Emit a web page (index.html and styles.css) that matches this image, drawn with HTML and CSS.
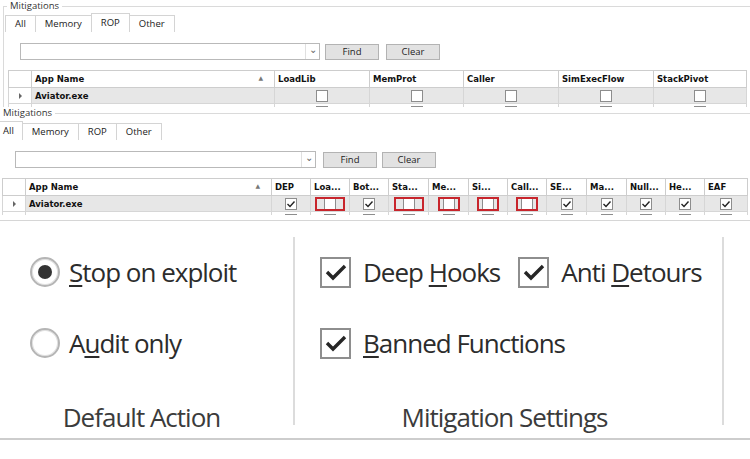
FILE: index.html
```html
<!DOCTYPE html>
<html lang="en">
<head>
  <meta charset="UTF-8" />
  <title>EMET Mitigations</title>
  <link rel="stylesheet" href="styles.css">
</head>
<body>

  <!-- first capture: ROP tab -->
  <div class="win win-top">
    <fieldset class="group">
      <legend>Mitigations</legend>
      <div class="tabs">
        <span class="tab">All</span><span class="tab">Memory</span><span class="tab active">ROP</span><span class="tab">Other</span>
      </div>
      <div class="search">
        <div class="combo"><span class="combo-arrow">&#8964;</span></div>
        <button class="btn btn-find">Find</button>
        <button class="btn btn-clear">Clear</button>
      </div>
      <table class="grid">
        <colgroup>
          <col style="width:23px"><col style="width:243px"><col style="width:95px"><col style="width:94px">
          <col style="width:95px"><col style="width:95px"><col style="width:93px">
        </colgroup>
        <tr>
          <th class="rh"></th>
          <th>App Name <span class="sort">&#9650;</span></th>
          <th>LoadLib</th><th>MemProt</th><th>Caller</th><th>SimExecFlow</th><th>StackPivot</th>
        </tr>
        <tr class="sel">
          <td class="rh"><span class="caret"></span></td>
          <td class="name">Aviator.exe</td>
          <td><span class="chk"></span></td><td><span class="chk"></span></td><td><span class="chk"></span></td>
          <td><span class="chk"></span></td><td><span class="chk"></span></td>
        </tr>
        <tr class="next">
          <td class="rh"></td><td></td>
          <td><span class="chk"></span></td><td><span class="chk"></span></td><td><span class="chk"></span></td>
          <td><span class="chk"></span></td><td><span class="chk"></span></td>
        </tr>
      </table>
    </fieldset>
  </div>

  <!-- second capture: All tab -->
  <div class="win win-mid">
    <fieldset class="group">
      <legend>Mitigations</legend>
      <div class="tabs">
        <span class="tab active">All</span><span class="tab">Memory</span><span class="tab">ROP</span><span class="tab">Other</span>
      </div>
      <div class="search">
        <div class="combo"><span class="combo-arrow">&#8964;</span></div>
        <button class="btn btn-find">Find</button>
        <button class="btn btn-clear">Clear</button>
      </div>
      <table class="grid">
        <colgroup>
          <col style="width:23px"><col style="width:246px">
          <col style="width:39px"><col style="width:39px"><col style="width:39px"><col style="width:40px">
          <col style="width:40px"><col style="width:39px"><col style="width:39px"><col style="width:40px">
          <col style="width:40px"><col style="width:39px"><col style="width:39px"><col style="width:43px">
        </colgroup>
        <tr>
          <th class="rh"></th>
          <th>App Name <span class="sort">&#9650;</span></th>
          <th>DEP</th><th>Loa...</th><th>Bot...</th><th>Sta...</th><th>Me...</th><th>Si...</th>
          <th>Call...</th><th>SE...</th><th>Ma...</th><th>Null...</th><th>He...</th><th>EAF</th>
        </tr>
        <tr class="sel">
          <td class="rh"><span class="caret"></span></td>
          <td class="name">Aviator.exe</td>
          <td><span class="chk on"></span></td>
          <td><span class="hl"><span class="chk"></span></span></td>
          <td><span class="chk on"></span></td>
          <td><span class="hl"><span class="chk"></span></span></td>
          <td><span class="hl hl-sm"><span class="chk"></span></span></td>
          <td><span class="hl hl-sm"><span class="chk"></span></span></td>
          <td><span class="hl hl-sm"><span class="chk"></span></span></td>
          <td><span class="chk on"></span></td>
          <td><span class="chk on"></span></td>
          <td><span class="chk on"></span></td>
          <td><span class="chk on"></span></td>
          <td><span class="chk on"></span></td>
        </tr>
        <tr class="next">
          <td class="rh"></td><td></td>
          <td><span class="chk"></span></td><td><span class="chk"></span></td><td><span class="chk"></span></td>
          <td><span class="chk"></span></td><td><span class="chk"></span></td><td><span class="chk"></span></td>
          <td><span class="chk"></span></td><td><span class="chk"></span></td><td><span class="chk"></span></td>
          <td><span class="chk"></span></td><td><span class="chk"></span></td><td><span class="chk"></span></td>
        </tr>
      </table>
    </fieldset>
  </div>

  <!-- zoomed ribbon -->
  <div class="ribbon">
    <div class="rgroup rgroup-action">
      <div class="opts">
        <div class="opt"><span class="radio on"></span><span><u>S</u>top on exploit</span></div>
        <div class="opt"><span class="radio"></span><span>A<u>u</u>dit only</span></div>
      </div>
      <div class="caption">Default Action</div>
    </div>
    <div class="rsep"></div>
    <div class="rgroup rgroup-settings">
      <div class="opts">
        <div class="opt-row">
          <div class="opt">
            <span class="cbx"><svg width="22" height="18" viewBox="0 0 22 18"><polyline points="2,9 8,15 20,3" fill="none" stroke="#262626" stroke-width="3.4"/></svg></span>
            <span>Deep <u>H</u>ooks</span>
          </div>
          <div class="opt">
            <span class="cbx"><svg width="22" height="18" viewBox="0 0 22 18"><polyline points="2,9 8,15 20,3" fill="none" stroke="#262626" stroke-width="3.4"/></svg></span>
            <span>Anti <u>D</u>etours</span>
          </div>
        </div>
        <div class="opt">
          <span class="cbx"><svg width="22" height="18" viewBox="0 0 22 18"><polyline points="2,9 8,15 20,3" fill="none" stroke="#262626" stroke-width="3.4"/></svg></span>
          <span><u>B</u>anned Functions</span>
        </div>
      </div>
      <div class="caption">Mitigation Settings</div>
    </div>
    <div class="rsep"></div>
  </div>

</body>
</html>
```

FILE: styles.css
```css
* {
  box-sizing: border-box;
}

body {
  margin: 0;
  width: 750px;
  height: 459px;
  overflow: hidden;
  background: #fff;
  font-family: "Open Sans", sans-serif;
  color: #222;
}

/* small windows */
.win {
  overflow: hidden;
}

.win-top {
  height: 107px;
  padding-left: 3px;
}

.win-mid {
  height: 108px;
}

.group {
  margin: 0;
  padding: 0;
  border: 0;
  border-top: 1px solid #dadada;
}

.win-top .group {
  border-left: 1px solid #dadada;
}

.group legend {
  font-size: 9.5px;
  line-height: 12px;
  color: #333;
  padding: 0 3px;
  margin-left: 3px;
}

.win-mid .group legend {
  margin-left: 0;
}

.tabs {
  display: flex;
  align-items: flex-end;
  height: 19px;
  margin-top: 1px;
  padding-left: 1px;
}

.win-mid .tabs {
  margin-top: 2px;
  padding-left: 0;
}

.tab {
  height: 17px;
  padding: 0 9px;
  margin-right: -1px;
  border: 1px solid #d4d4d4;
  border-bottom: 0;
  background: #fff;
  font-size: 9.5px;
  line-height: 15px;
  color: #222;
}

.tab.active {
  height: 19px;
  line-height: 17px;
}

.win-mid .tab:first-child {
  border-left: 0;
  padding: 0 8px 0 3px;
}

.search {
  display: flex;
  align-items: center;
  margin: 11px 0 0 16px;
}

.win-mid .search {
  margin-left: 15px;
}

.combo {
  width: 300px;
  height: 17px;
  border: 1px solid #b9b9b9;
  display: flex;
  justify-content: flex-end;
}

.win-mid .combo {
  width: 301px;
}

.combo-arrow {
  width: 14px;
  border-left: 1px solid #e0e0e0;
  font-size: 10px;
  line-height: 10px;
  text-align: center;
  color: #666;
}

.btn {
  width: 54px;
  height: 16px;
  padding: 0;
  background: #e2e2e2;
  border: 1px solid #b3b3b3;
  font-family: "Open Sans", sans-serif;
  font-size: 9.5px;
  line-height: 13px;
  color: #222;
}

.btn-find {
  margin-left: 5px;
}

.btn-clear {
  margin-left: 7px;
}

.win-mid .btn-find {
  margin-left: 7px;
}

.win-mid .btn-clear {
  margin-left: 5px;
}

/* grid */
.grid {
  margin: 10px 0 0 4px;
  border-collapse: collapse;
  table-layout: fixed;
  font-family: "DejaVu Sans", sans-serif;
  font-size: 8.5px;
  font-weight: bold;
  color: #111;
}

.win-mid .grid {
  margin-left: 2px;
}

.grid th {
  height: 17px;
  padding: 0 0 0 3px;
  text-align: left;
  background: #fff;
  border: 1px solid #cdcdcd;
  white-space: nowrap;
  overflow: hidden;
}

.grid td {
  height: 16px;
  padding: 0;
  text-align: center;
  border: 1px solid #d6d6d6;
  line-height: 0;
}

.grid .sel td {
  background: #e7e7e7;
}

.grid .sel td.rh,
.grid th.rh {
  background: #fff;
}

.grid td.name {
  text-align: left;
  padding-left: 3px;
  line-height: 14px;
}

.sort {
  float: right;
  margin-right: 11px;
  font-size: 6px;
  color: #777;
}

.caret {
  display: inline-block;
  width: 0;
  height: 0;
  border-top: 3px solid transparent;
  border-bottom: 3px solid transparent;
  border-left: 3px solid #666;
}

.chk {
  display: inline-block;
  width: 12px;
  height: 12px;
  border: 1px solid #8d8d8d;
  background: #fff;
  vertical-align: middle;
}

.chk.on {
  background: #fff url("data:image/svg+xml,%3Csvg xmlns='http://www.w3.org/2000/svg' width='10' height='10'%3E%3Cpolyline points='1.5,5 4,7.5 8.5,2.5' fill='none' stroke='%23222' stroke-width='1.4'/%3E%3C/svg%3E") center no-repeat;
}

.hl {
  display: inline-block;
  height: 14px;
  padding: 0 7px;
  border: 2px solid #c8252c;
  overflow: hidden;
  vertical-align: middle;
  line-height: 0;
}

.hl .chk {
  margin-top: -1px;
}

.hl-sm {
  padding: 0 3px;
}

/* ribbon */
.ribbon {
  display: flex;
  height: 220px;
  margin-top: 5px;
  border-top: 1px solid #d6d6d6;
  border-bottom: 2px solid #cdcdcd;
  font-size: 26px;
  letter-spacing: -1px;
  color: #2c2c2c;
}

.rgroup {
  display: flex;
  flex-direction: column;
  padding: 33px 0 6px;
}

.rgroup-action {
  width: 293px;
}

.rgroup-action .opts {
  padding-left: 30px;
}

.rgroup-settings {
  width: 427px;
}

.rgroup-settings .opts {
  padding-left: 25px;
}

.rsep {
  width: 2px;
  margin: 16px 0 13px;
  background: #dcdcdc;
}

.opts {
  display: flex;
  flex-direction: column;
  gap: 35px;
}

.opt-row {
  display: flex;
  gap: 18px;
}

.opt {
  display: flex;
  align-items: center;
  height: 36px;
  gap: 9px;
  white-space: nowrap;
}

.rgroup-settings .opt {
  gap: 12px;
}

.opt u {
  text-decoration-thickness: 2px;
  text-underline-offset: 3px;
}

.radio {
  display: flex;
  align-items: center;
  justify-content: center;
  width: 30px;
  height: 30px;
  border-radius: 50%;
  border: 2px solid #b5b5b5;
  box-shadow: inset 0 0 0 1px #e2e2e2;
}

.radio.on::after {
  content: "";
  width: 14px;
  height: 14px;
  border-radius: 50%;
  background: #333;
}

.cbx {
  display: flex;
  align-items: center;
  justify-content: center;
  width: 31px;
  height: 31px;
  border: 2px solid #8e8e8e;
  background: #fff;
}

.caption {
  margin-top: auto;
  line-height: 30px;
  text-align: center;
  color: #3b3b3b;
}

.rgroup-action .caption {
  padding-right: 10px;
}

.rgroup-settings .caption {
  padding-right: 8px;
}
```
